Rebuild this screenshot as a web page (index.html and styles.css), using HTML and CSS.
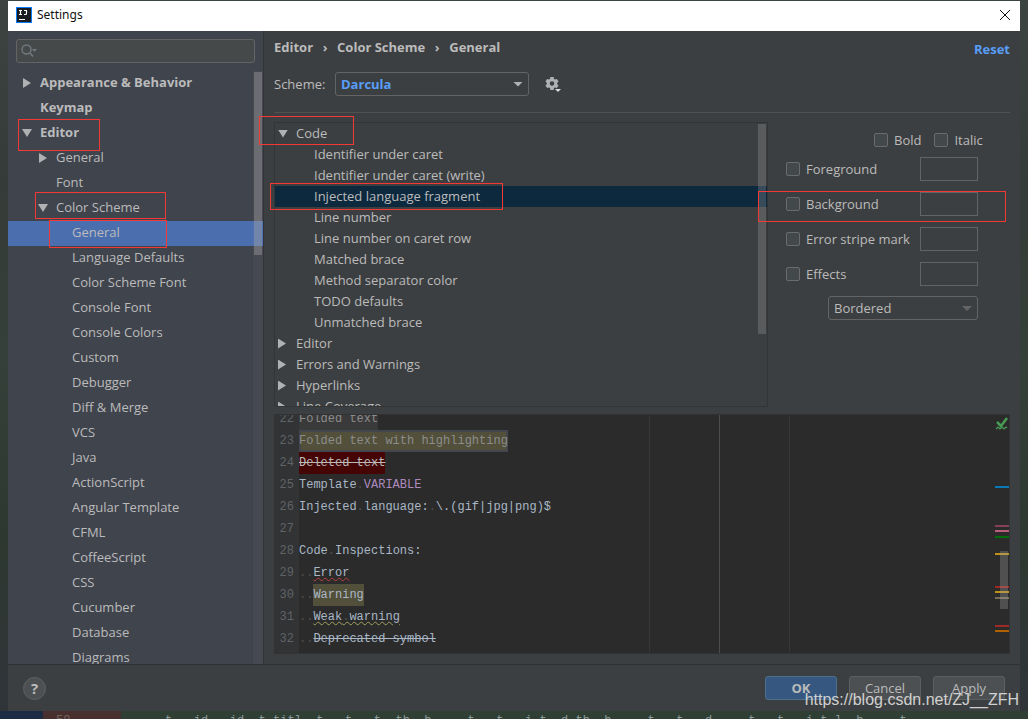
FILE: index.html
```html
<!DOCTYPE html>
<html lang="en">
<head>
<meta charset="utf-8">
<meta name="viewport" content="width=device-width, initial-scale=1">
<title>Settings</title>
<link rel="stylesheet" href="styles.css">
</head>
<body>
<div class="backdrop">
<div class="backdrop-strip" aria-hidden="true"><span class="backdrop-project"></span><span class="backdrop-gutter">58</span><span class="backdrop-code">t&nbsp; &nbsp;id &nbsp; id &nbsp;t titl&nbsp; t &nbsp; t &nbsp; t &nbsp;th &nbsp;h &nbsp; &nbsp; t &nbsp; t &nbsp; i t &nbsp;d th &nbsp;h &nbsp; &nbsp; t &nbsp; t &nbsp; d &nbsp; &nbsp; t &nbsp; t &nbsp; i t l &nbsp;h &nbsp; &nbsp; t</span></div>
<main class="dialog">
  <header class="titlebar">
    <svg class="app-icon" viewBox="0 0 16 16" aria-hidden="true"><rect width="16" height="16" fill="#087cfa"/><rect x="1" y="1" width="14" height="14" fill="#1b1c22"/><path d="M3 3.5h3M4.500 3.500v4M3 7.500h3M8 3.500h3M10.500 3.500v3q0 1-1 1h-1.500M3 12.500h6" stroke="#fff" stroke-width="1.200" fill="none"/></svg>
    <h1 class="title">Settings</h1>
    <button class="close" aria-label="Close"><svg viewBox="0 0 12 12" width="12" height="12"><path d="M1 1l10 10M11 1L1 11" stroke="#111" fill="none"/></svg></button>
  </header>
  <div class="body">
    <nav class="sidebar" aria-label="Settings categories">
      <div class="search">
        <svg viewBox="0 0 18 14" width="18" height="14" aria-hidden="true"><circle cx="5.500" cy="5.500" r="4.500" stroke="#71797e" stroke-width="1.400" fill="none"/><path d="M9 9l3 3.500" stroke="#71797e" stroke-width="1.800"/><path d="M11 5h5l-2.500 3z" fill="#71797e"/></svg>
        <input type="text" aria-label="Search settings">
      </div>
      <div class="nav-tree">
        <ul class="tree">
          <li class="item top"><i class="arrow right"></i>Appearance &amp; Behavior</li>
          <li class="item top"><i class="arrow"></i>Keymap</li>
          <li class="item top"><i class="arrow down"></i>Editor</li>
          <li class="item mid"><i class="arrow right"></i>General</li>
          <li class="item mid"><i class="arrow"></i>Font</li>
          <li class="item mid"><i class="arrow down"></i>Color Scheme</li>
          <li class="item leaf selected">General</li>
          <li class="item leaf">Language Defaults</li>
          <li class="item leaf">Color Scheme Font</li>
          <li class="item leaf">Console Font</li>
          <li class="item leaf">Console Colors</li>
          <li class="item leaf">Custom</li>
          <li class="item leaf">Debugger</li>
          <li class="item leaf">Diff &amp; Merge</li>
          <li class="item leaf">VCS</li>
          <li class="item leaf">Java</li>
          <li class="item leaf">ActionScript</li>
          <li class="item leaf">Angular Template</li>
          <li class="item leaf">CFML</li>
          <li class="item leaf">CoffeeScript</li>
          <li class="item leaf">CSS</li>
          <li class="item leaf">Cucumber</li>
          <li class="item leaf">Database</li>
          <li class="item leaf">Diagrams</li>
        </ul>
        <div class="track"><div class="thumb nav-thumb"></div></div>
      </div>
    </nav>
    <section class="content">
      <div class="crumbs"><span>Editor</span><span class="sep">›</span><span>Color Scheme</span><span class="sep">›</span><span>General</span><a class="reset" href="#">Reset</a></div>
      <div class="scheme">
        <label for="scheme">Scheme:</label>
        <div class="select-wrap scheme-select"><select id="scheme"><option>Darcula</option></select><i class="arrow down"></i></div>
        <button class="gear" aria-label="Scheme actions"><svg viewBox="0 0 16 16" width="16" height="16"><g fill="#afb1b3"><path fill-rule="evenodd" d="M5.400 1h3.200l.4 1.900 1.100.6 1.800-.6 1.600 2.700-1.400 1.300v1.200l1.400 1.300-1.600 2.700-1.800-.6-1.100.6-.4 1.900H5.400L5 12.100l-1.100-.6-1.800.6L.5 9.400l1.400-1.300V6.900L.5 5.600l1.600-2.700 1.800.6L5 2.900zM7 5.200a2.300 2.300 0 1 0 0 4.600 2.300 2.300 0 0 0 0-4.600z"/></g><path d="M9 12h7v4H9z" fill="#3c3f41"/><path d="M10 13h6l-3 3z" fill="#dcdcdc"/></svg></button>
      </div>
      <div class="panes">
        <div class="attributes">
          <ul class="tree attr-tree">
            <li class="item"><i class="arrow down"></i>Code</li>
            <li class="item leaf">Identifier under caret</li>
            <li class="item leaf">Identifier under caret (write)</li>
            <li class="item leaf selected">Injected language fragment</li>
            <li class="item leaf">Line number</li>
            <li class="item leaf">Line number on caret row</li>
            <li class="item leaf">Matched brace</li>
            <li class="item leaf">Method separator color</li>
            <li class="item leaf">TODO defaults</li>
            <li class="item leaf">Unmatched brace</li>
            <li class="item"><i class="arrow right"></i>Editor</li>
            <li class="item"><i class="arrow right"></i>Errors and Warnings</li>
            <li class="item"><i class="arrow right"></i>Hyperlinks</li>
            <li class="item"><i class="arrow right"></i>Line Coverage</li>
          </ul>
          <div class="thumb attr-thumb"></div>
        </div>
        <form class="options">
          <div class="styles"><label><input type="checkbox">Bold</label><label><input type="checkbox">Italic</label></div>
          <div class="option"><label><input type="checkbox">Foreground</label><button type="button" class="swatch" aria-label="Foreground color"></button></div>
          <div class="option"><label><input type="checkbox">Background</label><button type="button" class="swatch" aria-label="Background color"></button></div>
          <div class="option"><label><input type="checkbox">Error stripe mark</label><button type="button" class="swatch" aria-label="Error stripe color"></button></div>
          <div class="option"><label><input type="checkbox">Effects</label><button type="button" class="swatch" aria-label="Effects color"></button></div>
          <div class="select-wrap effect-select"><select aria-label="Effect type" disabled><option>Bordered</option></select><i class="arrow down"></i></div>
        </form>
      </div>
      <div class="preview">
        <ol class="numbers"><li>22</li><li>23</li><li>24</li><li>25</li><li>26</li><li>27</li><li>28</li><li>29</li><li>30</li><li>31</li><li>32</li></ol>
        <div class="code">
          <div><span class="folded">Folded text</span></div>
          <div><span class="folded-hl">Folded text with highlighting</span></div>
          <div><span class="deleted">Deleted text</span></div>
          <div>Template<b class="dot">.</b><span class="variable">VARIABLE</span></div>
          <div>Injected<b class="dot">.</b>language:<b class="dot">.</b>\.(gif|jpg|png)$</div>
          <div></div>
          <div>Code<b class="dot">.</b>Inspections:</div>
          <div><b class="dot">..</b><span class="error">Error</span></div>
          <div><b class="dot">..</b><span class="warning">Warning</span></div>
          <div><b class="dot">..</b><span class="weak">Weak<b class="dot">.</b>warning</span></div>
          <div><b class="dot">..</b><span class="deprecated">Deprecated symbol</span></div>
        </div>
        <svg class="stripes" viewBox="0 0 15 238" width="15" height="238" aria-hidden="true">
          <path d="M3 7l4 4 6-8" fill="none" stroke="#499c54" stroke-width="2.500"/><path d="M2 14l2-2 2 2 2-2 2 2 2-2 1 1" fill="none" stroke="#499c54" stroke-width="1.200"/>
          <path d="M1 71h14v2H1z" fill="#0a78b4"/><path d="M1 110h14v2H1z" fill="#87405a"/><path d="M1 115h14v2H1z" fill="#b86079"/><path d="M1 121h14v2H1z" fill="#006f0a"/><path d="M1 138h14v2H1zM1 176h14v2H1z" fill="#be9117"/><path d="M1 171h14v2H1zM1 210h14v2H1z" fill="#9e2927"/><path d="M1 182h14v2H1z" fill="#756d56"/><path d="M1 215h14v2H1z" fill="#b06100"/>
          <path d="M6 136h8v58H6z" fill="#a6a6a6" fill-opacity=".3"/>
        </svg>
      </div>
    </section>
  </div>
  <footer class="footer">
    <button class="help" aria-label="Help">?</button>
    <div class="actions"><button class="btn primary">OK</button><button class="btn">Cancel</button><button class="btn">Apply</button></div>
  </footer>
</main>
<div class="marks" aria-hidden="true">
  <div class="mark mark-editor"></div><div class="mark mark-scheme"></div><div class="mark mark-general"></div>
  <div class="mark mark-code"></div><div class="mark mark-injected"></div><div class="mark mark-background"></div>
</div>
<div class="watermark">https://blog.csdn.net/ZJ__ZFH</div>
</div>
</body>
</html>
```
FILE: styles.css
```css
* { box-sizing: border-box; }
body { margin: 0; font: 13px/20px "Open Sans", "Noto Sans", sans-serif; color: #bbb; }
ul, ol { list-style: none; margin: 0; padding: 0; }
button, input, select { font: inherit; color: inherit; margin: 0; padding: 0; }
svg { display: block; flex: none; }

.backdrop {
  position: relative; display: flex; height: 100vh; min-height: 480px; padding: 1px 8px 8px; overflow: hidden;
  background: linear-gradient(#3c4442, #353b38 25%, #35403a 50%, #2d3830 75%, #30343a);
}
.backdrop-strip {
  position: absolute; left: 0; right: 0; bottom: 0; height: 8px; display: flex; overflow: hidden;
  background: #2f3f34; color: #8d9b9e; font: 12px/20px "Liberation Mono", monospace; white-space: nowrap;
}
.backdrop-project { width: 43px; background: #1b2c44; }
.backdrop-gutter { width: 78px; padding-left: 13px; background: #48302f; color: #73615f; }
.backdrop-code { padding-left: 44px; }

.dialog { position: relative; flex: 1; min-width: 0; display: flex; flex-direction: column; background: #3c3f41; }
.titlebar { display: flex; align-items: center; height: 30px; flex: none; padding: 0 9px 2px 8px; background: #fff; color: #111; }
.app-icon { width: 16px; height: 16px; }
.title { flex: 1; margin: 0 0 0 5px; font: 400 12px/20px "Noto Sans", sans-serif; }
.close { border: 0; background: none; }
.body { flex: 1; min-height: 0; display: flex; }

.sidebar { width: 256px; flex: none; display: flex; flex-direction: column; background: #40444d; border-right: 1px solid #323438; }
.search { display: flex; align-items: center; gap: 4px; height: 24px; flex: none; margin: 8px 8px 8px; padding: 0 4px; background: #45494a; border: 1px solid #646464; border-radius: 3px; }
.search input { flex: 1; min-width: 0; border: 0; outline: 0; background: none; }
.nav-tree { position: relative; flex: 1; min-height: 0; display: flex; overflow: hidden; }
.tree { flex: 1; min-width: 0; }
.item { display: flex; align-items: center; height: 25px; padding: 0 0 3px 14px; white-space: nowrap; }
.top { font-weight: 700; }
.mid { padding-left: 30px; }
.leaf { padding-left: 64px; }
.selected { background: #4b6eaf; }
.arrow { width: 18px; flex: none; }
.item .arrow { margin-top: 2px; }
.arrow.right::before, .arrow.down::before { content: ""; display: block; width: 8px; height: 10px; background: #afb1b3; clip-path: polygon(0 0, 100% 50%, 0 100%); }
.arrow.down::before { width: 10px; height: 8px; clip-path: polygon(0 0, 100% 0, 50% 100%); }
.sidebar .arrow.right { padding-left: 1px; }
.track { position: absolute; top: 0; right: 0; bottom: 0; width: 10px; background: rgba(255, 255, 255, .03); }
.thumb { position: absolute; width: 8px; background: rgba(166, 166, 166, .4); }
.nav-thumb { top: 1px; right: 1px; height: 183px; }

.content { flex: 1; min-width: 0; display: flex; flex-direction: column; padding: 5px 10px 10px; }
.crumbs { display: flex; align-items: center; height: 23px; flex: none; padding-bottom: 1px; font-weight: 700; }
.sep { width: 24px; text-align: center; }
.reset { margin: 4px 0 0 auto; color: #589df6; text-decoration: none; }
.scheme { display: flex; align-items: center; flex: none; height: 54px; padding-bottom: 4px; border-bottom: 1px solid #515151; }
.scheme label { width: 61px; }
.select-wrap { position: relative; height: 24px; }
.select-wrap select { appearance: none; width: 100%; height: 24px; padding: 0 5px; background: #3c3f41; border: 1px solid #646464; border-radius: 3px; outline: 0; opacity: 1; }
.select-wrap .arrow { position: absolute; right: 6px; top: 10px; width: 10px; pointer-events: none; }
.select-wrap .arrow::before { height: 5px; }
.scheme-select { width: 194px; }
.scheme-select select { color: #589df6; font-weight: 700; }
.gear { margin-left: 16px; border: 0; background: none; }

.panes { display: flex; flex: 1; min-height: 0; margin-top: 9px; }
.attributes { position: relative; flex: 1; min-width: 0; display: flex; overflow: hidden; border: 1px solid #323435; }
.attr-tree .item { height: 21px; padding: 0 0 2px 3px; }
.attr-tree .leaf { padding-left: 39px; }
.attr-tree .selected { background: #0d293e; }
.attr-thumb { top: 1px; right: 1px; height: 210px; background: rgba(166, 166, 166, .28); }
.options { width: 242px; flex: none; padding: 7px 32px 0 18px; display: flex; flex-direction: column; }
.options label { display: flex; align-items: center; gap: 6px; white-space: nowrap; }
.options input { appearance: none; width: 14px; height: 14px; background: #43494a; border: 1px solid #6b6b6b; border-radius: 2px; }
.styles { display: flex; gap: 13px; height: 22px; margin-left: 88px; }
.option { display: flex; align-items: center; justify-content: space-between; height: 35px; }
.swatch { width: 58px; height: 24px; background: none; border: 1px solid #646464; }
.effect-select { width: 150px; margin: 5px 0 0 auto; }
.effect-select .arrow::before { background: #646464; }

.preview { flex: none; display: flex; height: 240px; margin-top: 7px; overflow: hidden; border: 1px solid #323232; background: #2b2b2b; font: 12px/22px "Liberation Mono", "DejaVu Sans Mono", monospace; }
.numbers, .code { display: flex; flex-direction: column; justify-content: flex-end; padding-bottom: 3px; }
.numbers { width: 24px; flex: none; padding-right: 5px; text-align: right; color: #606366; background: #313335; }
.numbers li, .code div { height: 22px; flex: none; }
.code {
  flex: 1; min-width: 0; color: #a9b7c6; white-space: pre;
  background: linear-gradient(#373737, #373737) 350px 0 / 1px 100% no-repeat, linear-gradient(#4d4d4d, #4d4d4d) 420px 0 / 1px 100% no-repeat, linear-gradient(#373737, #373737) 490px 0 / 1px 100% no-repeat;
}
.code span { display: inline-block; height: 22px; }
.dot { color: #505050; font-weight: 400; }
.folded { color: #8c8c8c; background: #3a3a3a; }
.folded-hl { color: #8c8c8c; background: #52503a; box-shadow: inset 0 0 0 2px #43474d; }
.deleted { color: #bbb; background: #450505; text-decoration: line-through; }
.variable { color: #ae8abe; }
.error { text-decoration: underline wavy #bc3f3c 1px; }
.warning { background: #52503a; }
.weak { text-decoration: underline wavy #a0a060 1px; }
.deprecated { text-decoration: line-through; }

.footer { display: flex; align-items: center; justify-content: space-between; flex: none; height: 47px; padding: 0 15px; border-top: 1px solid #2f3133; }
.help { width: 23px; height: 23px; border: 1px solid #5e6162; border-radius: 50%; background: #4c5052; font-size: 15px; font-weight: 700; line-height: 20px; }
.actions { display: flex; gap: 12px; }
.btn { width: 72px; height: 24px; border: 1px solid #5e6060; border-radius: 3px; background: #4c5052; }
.primary { background: #365880; border-color: #4c708c; font-weight: 700; }

.mark { position: absolute; border: 1px solid #f43836; pointer-events: none; }
.mark-editor { left: 18px; top: 119px; width: 82px; height: 32px; }
.mark-scheme { left: 35px; top: 192px; width: 131px; height: 27px; }
.mark-general { left: 49px; top: 220px; width: 118px; height: 28px; }
.mark-code { left: 259px; top: 116px; width: 95px; height: 29px; }
.mark-injected { left: 270px; top: 183px; width: 233px; height: 27px; }
.mark-background { right: 22px; top: 191px; width: 248px; height: 31px; }
.watermark { position: absolute; right: 9px; bottom: 9px; font: 16px/20px "Liberation Sans", Arial, sans-serif; color: #d0d0d0; pointer-events: none; }
```
